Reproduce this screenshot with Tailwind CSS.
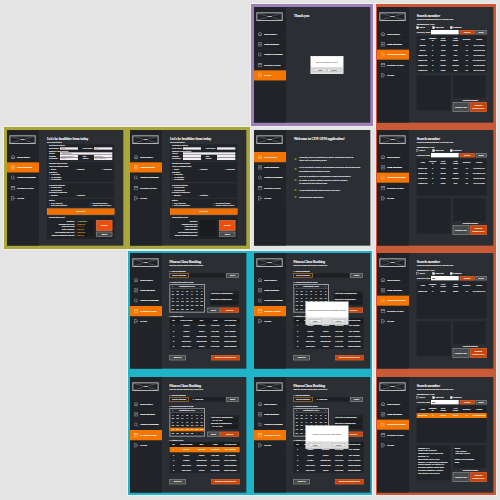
<!DOCTYPE html>
<html lang="en">
<head>
<meta charset="utf-8">
<title>Gym application screens</title>
<script src="https://cdn.jsdelivr.net/npm/@tailwindcss/browser@4"></script>
</head>
<body class="bg-[#e4e4e4]">
<main id="canvas" class="relative w-[500px] h-[500px] overflow-hidden bg-[#e4e4e4] font-['Roboto','Liberation_Sans',sans-serif]">
  <div class="absolute left-[250.7px] top-[4.3px] w-[122.6px] h-[121.7px] bg-[#9c80b6] outline outline-white/40"></div>
  <div class="absolute left-[375.5px] top-[4.3px] w-[120.5px] h-[491px] bg-[#c85a38] border border-[#df4f34] outline outline-white/40"></div>
  <div class="absolute left-[4px] top-[127.3px] w-[245.5px] h-[121.5px] bg-[#a9a63a] outline outline-white/40"></div>
  <div class="absolute left-[128px] top-[250.7px] w-[244px] h-[244.7px] bg-[#20b4c8] outline outline-white/40"></div>
</main>
<script>
// Every screen is laid out on a 348 unit grid and shown at one third of that size.
const icons = [
  '<path d="M1 7 7 1.5 13 7M3 6v6.500h3V9h2v3.500h3V6"/>',
  '<path d="M8 1.500H1.500v11h11V6M5 9l1-3 5-5 2 2-5 5z"/>',
  '<circle cx="6" cy="6" r="4.500"/><path d="M9.500 9.500 13 13"/>',
  '<path d="M1 2.500h12v10H1zM1 5.500h12M4 1v2M10 1v2"/>',
  '<path d="M8 3.500V1.500H2v11h6v-2M5 7h8M10.500 4.500 13 7l-2.500 2.500"/>'
];
const names = ['MAIN MENU', 'NEW MEMBER', 'SEARCH MEMBER', 'FITNESS CLASS', 'CLOSE'];

const sidebar = active => `
<aside class="w-[96px] h-full shrink-0 bg-[#202327] flex flex-col">
  <div class="mt-[16px] ml-[7px] w-[79px] h-[26px] border-[3px] border-[#b4b5b6] relative grid place-items-center">
    <svg class="absolute inset-0 w-full h-full" viewBox="0 0 75 22" preserveAspectRatio="none" fill="none" stroke="#8d9093" stroke-width="1.4"><path d="M0 0 28 8M47 14 75 22M75 0 47 8M28 14 0 22"/></svg>
    <span class="relative text-[6.5px] font-bold leading-none">logo</span>
  </div>
  <nav class="mt-[24px] flex flex-col">
    ${names.map((n, i) => `<div class="h-[31px] flex items-center pl-[11px] gap-[6px] border-b border-[#2b2e32] ${i === active ? 'bg-[#f47500]' : ''}">
      <svg class="w-[14px] h-[14px] shrink-0" viewBox="0 0 14 14" fill="none" stroke="${i === active ? '#ffd9a8' : '#b9bcbf'}" stroke-width="1.500">${icons[i]}</svg>
      <span class="text-[6.700px] font-black whitespace-nowrap leading-none">${n}</span></div>`).join('')}
  </nav>
</aside>`;

const title = (t, sub) => `<h1 class="h-[13px] leading-[13px] text-[9px] font-bold tracking-[-0.800px] whitespace-nowrap font-['DejaVu_Serif','Liberation_Serif',serif]">${t}</h1>
  ${sub ? `<p class="h-[5px] leading-[5px] text-[5.400px] font-bold whitespace-nowrap">${sub}</p>` : ''}`;

const btn = (t, cls) => `<div class="grid place-items-center text-center border-2 text-[6px] leading-[8px] font-bold ${cls}">${t}</div>`;
const grey = 'bg-[#48494b] border-[#85878a]';
const orange = 'bg-[#cc4304] border-[#b4694c]';

const dialog = (text, a, b, big) => `<div class="absolute [-webkit-text-stroke:0px] ${big ? 'left-[155px] top-[146px] w-[128px] h-[69px]' : 'left-[170px] top-[147px] w-[98px] h-[54px]'} bg-white border border-[#d0d0d0] text-[#444] flex flex-col">
  <div class="h-[6px] leading-[8px] text-right pr-[4px] text-[6px]">×</div>
  <div class="flex-1 grid place-items-center text-[6.500px] whitespace-nowrap">${text}</div>
  <div class="${big ? 'h-[21px] px-[8px]' : 'h-[20px] px-[7px]'} bg-[#dcdcdc] flex items-center justify-between">
    ${btn(a, 'w-[40px] h-[10px] bg-[#ececec] border-[#bcbcbc]')}${btn(b, 'w-[40px] h-[10px] bg-[#ececec] border-[#bcbcbc]')}
  </div></div>`;

const thanks = () => `<div class="pt-[21px] pl-[24px]">${title('Thank you')}</div>`;

const home = () => `<div class="pt-[21px] pl-[24px]">${title('Welcome to CITY GYM application!')}
  <ul class="mt-[36px] flex flex-col text-[6.200px] leading-[9.500px] font-bold whitespace-nowrap">
  ${[['h-[33px]', 'Currently, you are located here, where could move back up<br>other lists of functions/forms.'],
     ['h-[31px]', 'If it is needed to register new members personal and membership<br>information and calculate review.'],
     ['h-[33px]', 'File has a function of searching for registered members<br>by name or phone number and to select the member<br>to connect to the fitness class.'],
     ['h-[30px]', 'If you want book the fitness class from here.'],
     ['h-[10px]', 'Shut down the application.']]
    .map(([h, t]) => `<li class="${h} flex items-center gap-[9px]"><span class="w-[7px] text-[#d8b800] text-[8px] [-webkit-text-stroke:0px]">➔</span><span>${t}</span></li>`).join('')}
  </ul></div>`;

const people = [
  ['BASIC', '3', 'Jane', 'Smith', '12', '0211234567'],
  ['BASIC', '5', 'John', 'Lee', '12', '0223456789'],
  ['REGULAR', '2', 'Mary', 'Day', '12', '0215552121'],
  ['REGULAR', '6', 'Adam', 'White', '12', '02145557777'],
  ['PREMIUM', '4', 'Helen', 'Cooper', '12', '0229876543'],
  ['PREMIUM', '1', 'Peter', 'Kim', '24', '0212323456']
];
const check = (t, on, w) => `<span class="${w} flex items-center gap-[3px]"><i class="w-[6px] h-[6px] border border-white ${on ? 'bg-white' : ''}"></i>${t}</span>`;
const cols6 = 'grid grid-cols-[36px_24px_39px_35px_32px_43px] items-center text-center';
const search = (rows, query, none, selected) => `<div class="pt-[21px] pl-[23px] w-[235px]">${title('Search member', 'Search by membership type or last name only')}
  <div class="mt-[10px] h-[7px] leading-[7px] text-[5.800px] font-bold">MEMBERSHIP TYPE</div>
  <div class="h-[11px] flex text-[5.500px] font-bold">${check('BASIC', !none, 'w-[48px]')}${check('REGULAR', true, 'w-[53px]')}${check('PREMIUM', true, 'w-[48px]')}</div>
  <div class="mt-[2px] h-[13px] flex gap-[3px]"><span class="w-[40px] text-[5.600px] leading-[13px] font-bold whitespace-nowrap">Search by Name</span>
    <span class="w-[83px] bg-white text-[#333] text-[6px] leading-[13px] pl-[4px] font-bold">${query}</span>${btn('Search', 'w-[45px] ' + orange)}${btn('Reset', 'w-[33px] ' + grey)}</div>
  <section class="mt-[4px] w-[210px] h-[111px] bg-[#202327] text-[6px] font-bold leading-[6.500px]">
    <div class="${cols6} h-[22px]"><span>Type</span><span>Member<br>ID</span><span>First<br>Name</span><span>Last<br>Name</span><span>Duration</span><span>Phone</span></div>
    ${rows.map(r => `<div class="${cols6} h-[15px] ${selected ? 'bg-[#f47b00]' : ''}">${r.map(c => `<span>${c}</span>`).join('')}</div>`).join('')}
  </section>
  <div class="mt-[8px] flex gap-[8px]">
    <section class="w-[102px] h-[105px] bg-[#202327] text-[5.800px] leading-[8.400px] font-bold p-[4px] whitespace-nowrap">${selected ? 'Member ID: 2<br>Name: SMITH WHITE<br>Membership Type: REGULAR<br>Duration: 12<br>Expiry Date: 2022-11-28<br>Address: 12 Main Road, Auckland<br>Phone Number: 02145557777<br>Payment Method: Direct debit<br>Payment Frequency: Monthly<br>Start period: 2021-09-28' : ''}</section>
    <div class="w-[102px] flex flex-col">
      <section class="w-[97px] h-[69px] bg-[#202327] text-[5.800px] leading-[8.500px] font-bold p-[4px] whitespace-nowrap">${selected ? 'Extras:<br>&nbsp; 24/7 Access<br>&nbsp; Personal Trainer<br><br>Fitness Class Booking:<br>none' : ''}</section>
      <div class="h-[11px] leading-[13px] text-center text-[5.800px] font-bold">Selected member</div>
      <div class="flex gap-[2px] -ml-[2px]">${btn('Show All Info', 'w-[50px] h-[30px] ' + grey)}${btn('Booking<br>Fitness Class', 'w-[51px] h-[30px] ' + orange)}</div>
    </div>
  </div></div>`;

const lab = t => `<span class="w-[33px]">${t}</span>`;
const inp = (w, t) => `<span class="${w} h-[7px] bg-[#f2edf2] text-[#777] text-[5.500px] [-webkit-text-stroke:0px] leading-[7px] pl-[3px]">${t}</span>`;
const radio = (t, w) => `<span class="${w || ''} whitespace-nowrap"><span class="mr-[4px]">•</span>${t}</span>`;
const panel = 'w-[202px] bg-[#202327] px-[6px] mb-[4px] whitespace-nowrap';
const register = filled => {
  const v = t => filled ? t : '';
  return `<div class="pt-[21px] pl-[24px] text-[6.200px] leading-[7.600px] font-bold">${title("Let's be healthier from today", 'Fill in Registration')}
  <section class="${panel} mt-[4px] h-[49px] pt-[1px]">
    <div class="h-[8px]">Customer details</div>
    <div class="flex h-[8px]">${lab('First name')}${inp('w-[54px]', v('Jack'))}<span class="w-[48px] pl-[14px]">Last name</span>${inp('w-[55px]', v('Lee'))}</div>
    <div class="h-[7px]">Address and contact</div>
    <div class="flex h-[8px]">${lab('Street')}${inp('w-[157px]', v('1 Main Road'))}</div>
    <div class="flex h-[8px]">${lab('Suburb')}${inp('w-[54px]', v('Central District'))}<span class="w-[48px] pl-[14px]">City</span>${inp('w-[55px]', v('Auckland'))}</div>
    <div class="flex h-[8px]">${lab('Postcode')}${inp('w-[54px]', v('1010'))}<span class="w-[48px] pl-[14px]">Phone</span>${inp('w-[55px]', v('0211234567'))}</div>
  </section>
  <section class="${panel} h-[60px] pt-[1px]">
    <div class="h-[9px]">Membership details</div><div class="h-[8px]">Type of membership</div>
    <div class="flex h-[9px]">${radio('Basic', 'w-[79px]')}${radio('Regular', 'w-[78px]')}${radio('Premium')}</div>
    <div>Duration</div><div>${radio('3 months')}</div><div>${radio('12 months')}</div><div>${radio('24 months')}</div>
  </section>
  <section class="${panel} h-[43px] pt-[2px]">
    <div>Payment method</div><div>${radio('Credit card')}</div><div>${radio('Direct debit')}</div><div>Payment frequency</div>
    <div class="flex">${radio('Weekly', 'w-[79px]')}${radio('Monthly')}</div>
  </section>
  <section class="${panel} h-[25px] pt-[1px]">
    <div>Extras</div>
    <div class="flex"><span class="w-[125px]">${radio('24/7 Access')}</span>${radio('Personal trainer')}</div>
    <div class="flex"><span class="w-[125px]">${radio('Diet consultation')}</span>${radio('Online fitness video')}</div>
  </section>
  <div class="w-[202px] h-[18px] mt-[4px] bg-[#f07000] border border-[#f9a35a] grid place-items-center">Calculate</div>
  <section class="${panel} h-[69px] mt-[4px] pt-[2px] flex flex-col">
    <div class="h-[11px]">Registration cost</div>
    <div class="flex gap-[9px]">
      <div class="w-[76px] text-right text-[6px] leading-[7.200px]"><p>Duration</p><p>Membership cost</p><p>Total discount</p><p>Extra charges</p><p class="mt-[4px]">Net membership cost</p><p>Regular payment amount</p></div>
      <div class="w-[48px] h-[48px] bg-[#191b1e] text-[6px] leading-[7.200px] text-[#c8a81c]">${filled ? '<p class="text-[#c5cf73]">12 months</p><p>$780.00</p><p class="text-[#b52c20]">$78.00</p><p>$52.00</p><p class="mt-[4px] text-[#e3a000]">$806.00</p><p class="text-[#e3a000]">$67.16</p>' : ''}</div>
      <div class="flex flex-col gap-[3px]">${btn('Submit', 'w-[48px] h-[31px] bg-[#f04e08] border-[#c77d60]')}${btn('Reset', 'w-[48px] h-[15px] ' + grey)}</div>
    </div>
  </section></div>`;
};

const classes = [
  ['1', 'Cardio', 'Monday', '10:00 PM', 'Fay Jumper'],
  ['2', 'Cardio', 'Friday', '9:00 AM', 'Fay Jumper'],
  ['3', 'Pilates', 'Wednesday', '12:00 PM', 'Polly Jonston'],
  ['4', 'Spin class', 'Wednesday', '3:00 PM', 'Mikel George'],
  ['5', 'Spin class', 'Friday', '10:00 AM', 'Mikel Mikaela']
];
const cols5 = 'grid grid-cols-[24px_52px_40px_40px_52px] items-center text-center';
const days = [[29,30,31,1,2,3,4],[5,6,7,8,9,10,11],[12,13,14,15,16,17,18],[19,20,21,22,23,24,25],[26,27,28,29,30,1,2]];
const fitness = (name, picked) => `<div class="pt-[21px] pl-[22px] text-[6px] font-bold">${title('Fitness Class Booking', 'Take the member details then select class')}
  <div class="mt-[12px] h-[8px] leading-[8px]">1. Search member</div>
  <div class="flex h-[15px] mt-[1px] gap-[2px]">${btn('Search member', 'w-[58px] bg-[#202327] border-[#c47c1c]')}<span class="w-[108px] my-[1px] bg-[#1d1f23] leading-[13px] pl-[10px]">${name}</span>${btn('Reset', 'w-[39px] ' + grey)}</div>
  <div class="mt-[8px] h-[9px] leading-[9px]">2. Choose the date to book</div>
  <div class="flex mt-[1px] h-[86px]">
    <section class="w-[107px] border-[3px] border-[#9b9da0] bg-[#202327] flex flex-col">
      <div class="h-[11px] flex justify-between items-center px-[6px] bg-[#2a2d31] text-[6.500px] border-b border-[#888]"><span>‹</span><span>September 2021</span><span>›</span></div>
      <div class="grid grid-cols-7 h-[13px] items-center text-center pt-[3px]"><i>S</i><i>M</i><i>T</i><i>W</i><i>T</i><i>F</i><i>S</i></div>
      ${days.map((w, r) => `<div class="grid grid-cols-7 h-[10.800px] items-center text-center text-[6.500px] ${picked && r === 3 ? 'bg-[#f47b00]' : ''}">${w.map((d, i) => `<span class="${(r === 4 && i > 4) ? 'text-[#777]' : ''}">${d}</span>`).join('')}</div>`).join('')}
    </section>
    <div class="pl-[7px] flex flex-col justify-end">
      <section class="ml-[7px] w-[88px] h-[43px] bg-[#202327] pt-[4px] px-[4px] leading-[9px] whitespace-nowrap text-[5.600px]"><p>Start date of membership</p><p class="h-[9px] bg-[#191b1e] pl-[4px]">${picked ? '20 &nbsp;09 &nbsp;2021' : ''}</p><p>End date of membership</p><p class="h-[9px] bg-[#191b1e] pl-[4px]">${picked ? '26 &nbsp;09 &nbsp;2021' : ''}</p></section>
      <div class="mt-[7px] flex gap-[2px]">${btn('Reset', 'w-[37px] h-[15px] ' + grey)}${btn('Confirm', 'w-[56px] h-[15px] ' + orange)}</div>
    </div>
  </div>
  <div class="mt-[6px] h-[9px] leading-[9px]">3. Fitness class</div>
  <section class="ml-[1px] mt-[1px] w-[210px] h-[93px] bg-[#202327]">
    <div class="${cols5} h-[15px] bg-[#191b1e] text-[5.800px]"><span>No.</span><span>CLASS NAME</span><span>DAY</span><span>TIME</span><span>INSTRUCTOR</span></div>
    ${classes.map((r, i) => `<div class="${cols5} h-[15.500px] ${picked && i === 0 ? 'bg-[#f47b00]' : ''}">${r.map(c => `<span>${c}</span>`).join('')}</div>`).join('')}
  </section>
  <div class="mt-[18px] w-[211px] flex justify-between">${btn('Reset All', 'w-[50px] h-[16px] ' + grey)}${btn('Booking Selected Class', 'w-[85px] h-[16px] whitespace-nowrap ' + orange)}</div>
</div>`;

const regular = [people[2], people[3], people[4], people[5]];
const screens = [
  [254, 7, 4, thanks(), dialog('Are you want to close?', 'Shut!', 'Cancel', false)],
  [377.3, 7, 2, search(people, '', false, false), ''],
  [6.7, 130, 1, register(true), ''],
  [130, 130, 1, register(false), ''],
  [254, 130, 0, home(), ''],
  [377.3, 130, 2, search(regular, '', true, false), ''],
  [130, 253.3, 3, fitness('', false), ''],
  [254, 253.3, 3, fitness('', false), dialog('Please press the Search member button.', 'Okay', 'Cancel', true)],
  [377.3, 253.3, 2, search([people[3]], 'Wh', true, false), ''],
  [130, 376.7, 3, fitness('3. Jane Lee', true), ''],
  [254, 376.7, 3, fitness('3. Jane Lee', false), dialog('Please select a day after today.', 'Okay', 'Cancel', true)],
  [377.3, 376.7, 2, search([people[3]], 'Wh', true, true), '']
];
document.getElementById('canvas').insertAdjacentHTML('beforeend', screens.map(([x, y, active, body, over]) =>
  `<article class="absolute w-[349px] h-[347px] origin-top-left scale-[0.3333] bg-[#2b2e33] text-[#f6f6f6] [-webkit-text-stroke:0.2px] flex overflow-hidden" style="left:${x}px;top:${y}px">${sidebar(active)}${body}${over}</article>`).join(''));
</script>
</body>
</html>
